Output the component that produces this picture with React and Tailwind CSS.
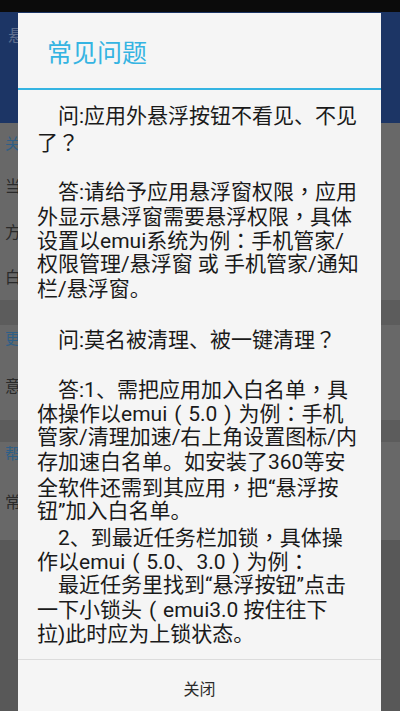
import React from "react";

const FONT = { fontFamily: "Roboto, 'Noto Sans CJK SC', sans-serif" };
const TC = { fontFamily: "'Noto Sans CJK TC', sans-serif" };

const lines = [
  { t: "问:应用外悬浮按钮不看见、不见", i: true },
  { t: "了？" },
  { t: "" },
  { t: "答:请给予应用悬浮窗权限，应用", i: true },
  { t: "外显示悬浮窗需要悬浮权限，具体" },
  { t: "设置以emui系统为例：手机管家/" },
  { t: "权限管理/悬浮窗 或 手机管家/通知" },
  { t: "栏/悬浮窗。" },
  { t: "" },
  { t: "问:莫名被清理、被一键清理？", i: true },
  { t: "" },
  { t: "答:1、需把应用加入白名单，具", i: true },
  { t: "体操作以emui（5.0）为例：手机" },
  { t: "管家/清理加速/右上角设置图标/内" },
  { t: "存加速白名单。如安装了360等安" },
  { t: "全软件还需到其应用，把“悬浮按" },
  { t: "钮”加入白名单。" },
  { t: "2、到最近任务栏加锁，具体操", i: true },
  { t: "作以emui（5.0、3.0）为例：" },
  { t: "最近任务里找到“悬浮按钮”点击", i: true },
  { t: "一下小锁头（emui3.0 按住往下" },
  { t: "拉)此时应为上锁状态。" },
];

function renderLine(s) {
  const out = [];
  let buf = "";
  const flush = () => {
    if (buf) {
      out.push(buf);
      buf = "";
    }
  };
  Array.from(s).forEach((c, idx) => {
    if (c === "，" || c === "：" || c === "？") {
      flush();
      out.push(
        <span key={idx} className="inline-block w-[1em] text-center" style={TC}>
          {c}
        </span>
      );
    } else if (c === "（" || c === "）") {
      flush();
      out.push(
        <span key={idx} className="inline-block w-[1em] text-center">
          {c === "（" ? "(" : ")"}
        </span>
      );
    } else {
      buf += c;
    }
  });
  flush();
  return out;
}

function BgHeader({ text, h }) {
  return (
    <div className={`flex items-center pl-[5px] text-[15px] text-[#2f5f86] ${h}`}>
      {text}
    </div>
  );
}

function BgItem({ text, h }) {
  return (
    <div className={`flex items-center pl-[5px] text-[16px] text-[#2a2a2a] ${h}`}>
      {text}
    </div>
  );
}

export default function App() {
  return (
    <div className="relative w-[400px] h-[711px] overflow-hidden bg-[#585858]" style={FONT}>
      {/* background app */}
      <div className="flex flex-col">
        <div className="h-[12px] bg-[#0b0b0b]" />
        <div className="h-[111px] bg-[#1c3565] flex items-start pt-[12px] pl-[8px] text-[17px] text-[#5f6f8e]">
          <span>悬浮按钮</span>
        </div>
        <div className="bg-[#686868] flex flex-col">
          <BgHeader text="关于" h="h-[42px]" />
          <BgItem text="当前版本" h="h-[44px]" />
          <BgItem text="方式设置" h="h-[47px]" />
          <BgItem text="白名单" h="h-[44px]" />
        </div>
        <div className="h-[25px] bg-[#5c5c5c]" />
        <div className="bg-[#686868] flex flex-col">
          <BgHeader text="更多" h="h-[28px]" />
          <BgItem text="意见反馈" h="h-[67px]" />
        </div>
        <div className="h-[22px] bg-[#5c5c5c]" />
        <div className="bg-[#686868] flex flex-col">
          <BgHeader text="帮助" h="h-[24px]" />
          <BgItem text="常见问题" h="h-[74px]" />
        </div>
      </div>

      {/* dialog */}
      <div className="absolute top-[13px] left-[18px] w-[363px] h-[720px] bg-[#f5f5f5] flex flex-col">
        <div className="h-[75px] flex items-center pt-[6px] pl-[29px] text-[25px] text-[#35b4e2]">
          常见问题
        </div>
        <div className="h-[2px] bg-[#35b4e2]" />
        <div className="h-[569px] overflow-hidden pt-[14px] pl-[19px] text-[21px] leading-[24.7px] text-[#1a1a1a]">
          {lines.map((l, k) => (
            <div
              key={k}
              className={`h-[24.7px] whitespace-pre ${l.i ? "pl-[21px]" : ""}`}
            >
              {renderLine(l.t)}
            </div>
          ))}
        </div>
        <div className="h-px bg-[#dcdcdc]" />
        <div className="h-[60px] flex items-center justify-center text-[16px] text-[#2a2a2a]">
          关闭
        </div>
      </div>
    </div>
  );
}
